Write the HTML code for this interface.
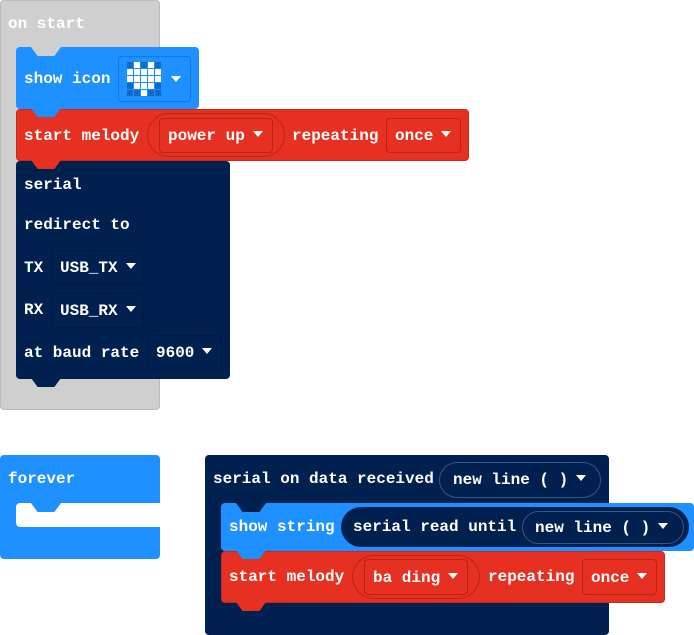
<!DOCTYPE html>
<html><head><meta charset="utf-8"><style>
body{margin:0;width:694px;height:634px;background:#fff;position:relative;overflow:hidden;font-family:"Liberation Mono",monospace;font-size:16px;font-weight:bold;color:#fff}
.a{position:absolute;box-sizing:border-box}
.t{position:absolute;line-height:20px;white-space:pre}
.tab{position:absolute;width:30px;height:9px;clip-path:polygon(0 0,100% 0,78% 100%,22% 100%)}
.dd{position:absolute;box-sizing:border-box;border-radius:4px;line-height:20px;white-space:pre;padding-left:8px}
.arr{display:inline-block;width:0;height:0;border-left:5px solid transparent;border-right:5px solid transparent;border-top:6px solid #fff;vertical-align:middle;margin-left:8px;margin-top:-3px}
.g{width:6px;height:6px;position:absolute}
</style></head><body>
<div class="a" style="left:0;top:0;width:160px;height:410px;background:#cfcfcf;border:1px solid #bcbcbc;border-radius:4px"></div>
<div class="t" style="left:8px;top:14px">on start</div>
<div class="a" style="left:16px;top:47px;width:183px;height:62px;background:#1e90ff;border-radius:4px"></div>
<div class="tab" style="left:31px;top:47px;background:#cfcfcf"></div>
<div class="t" style="left:24px;top:69px">show icon</div>
<div class="a" style="left:118px;top:56px;width:73px;height:46px;border:1px solid #1877d8;border-radius:4px"></div>
<div class="a" style="left:171px;top:76px;width:0;height:0;border-left:5px solid transparent;border-right:5px solid transparent;border-top:6px solid #fff"></div>
<div id="grid"></div>
<div class="a" style="left:16px;top:109px;width:453px;height:52px;background:#e63022;border-radius:4px;border:1px solid #c8281c"></div>
<div class="tab" style="left:31px;top:108px;background:#1e90ff"></div>
<div class="t" style="left:24px;top:126px">start melody</div>
<div class="a" style="left:147px;top:113px;width:138px;height:44px;border:1px solid #b82418;border-radius:22px"></div>
<div class="dd" style="left:159px;top:118px;width:114px;height:35px;border:1px solid #b82418;padding-top:7px">power up<span class="arr"></span></div>
<div class="t" style="left:292px;top:126px">repeating</div>
<div class="dd" style="left:386px;top:118px;width:75px;height:35px;border:1px solid #b82418;padding-top:7px">once<span class="arr"></span></div>
<div class="a" style="left:16px;top:161px;width:214px;height:218px;background:#002050;border-radius:4px"></div>
<div class="tab" style="left:31px;top:160px;background:#e63022"></div>
<div class="tab" style="left:31px;top:378px;background:#002050"></div>
<div class="t" style="left:24px;top:175px">serial</div>
<div class="t" style="left:24px;top:215px">redirect to</div>
<div class="t" style="left:24px;top:258px">TX</div>
<div class="dd" style="left:51px;top:250px;width:93px;height:35px;border:1px solid #001a40;padding-top:7px">USB_TX<span class="arr"></span></div>
<div class="t" style="left:24px;top:300px">RX</div>
<div class="dd" style="left:51px;top:293px;width:93px;height:35px;border:1px solid #001a40;padding-top:7px">USB_RX<span class="arr"></span></div>
<div class="t" style="left:24px;top:343px">at baud rate</div>
<div class="dd" style="left:147px;top:335px;width:75px;height:35px;border:1px solid #001a40;padding-top:7px">9600<span class="arr"></span></div>
<div class="a" style="left:0;top:455px;width:160px;height:104px;background:#1e90ff;border-radius:4px"></div>
<div class="a" style="left:16px;top:503px;width:144px;height:24px;background:#fff;border-radius:4px 0 0 4px"></div>
<div class="tab" style="left:31px;top:503px;background:#1e90ff"></div>
<div class="t" style="left:8px;top:469px">forever</div>
<div class="a" style="left:205px;top:455px;width:404px;height:180px;background:#002050;border-radius:4px"></div>
<div class="t" style="left:213px;top:469px">serial on data received</div>
<div class="dd" style="left:439px;top:462px;width:162px;height:36px;border:1px solid #3a5580;border-radius:18px;padding-left:13px;padding-top:7px">new line ( )<span class="arr"></span></div>
<div class="a" style="left:221px;top:503px;width:473px;height:48px;background:#1e90ff;border-radius:4px"></div>
<div class="tab" style="left:236px;top:503px;background:#002050"></div>
<div class="t" style="left:229px;top:517px">show string</div>
<div class="a" style="left:341px;top:507px;width:348px;height:40px;background:#002050;border-radius:20px"></div>
<div class="t" style="left:353px;top:517px">serial read until</div>
<div class="dd" style="left:522px;top:511px;width:162px;height:33px;border:1px solid #3a5580;border-radius:17px;padding-left:12px;padding-top:6px">new line ( )<span class="arr"></span></div>
<div class="a" style="left:221px;top:551px;width:444px;height:52px;background:#e63022;border-radius:4px;border:1px solid #c8281c"></div>
<div class="tab" style="left:236px;top:550px;background:#1e90ff"></div>
<div class="tab" style="left:236px;top:602px;background:#e63022"></div>
<div class="t" style="left:229px;top:567px">start melody</div>
<div class="a" style="left:352px;top:555px;width:128px;height:44px;border:1px solid #b82418;border-radius:22px"></div>
<div class="dd" style="left:364px;top:559px;width:104px;height:36px;border:1px solid #b82418;padding-top:8px">ba ding<span class="arr"></span></div>
<div class="t" style="left:488px;top:567px">repeating</div>
<div class="dd" style="left:582px;top:559px;width:75px;height:36px;border:1px solid #b82418;padding-top:8px">once<span class="arr"></span></div>
<script>
var p=["01010","11111","11111","01110","00100"],h="";
for(var r=0;r<5;r++)for(var c=0;c<5;c++)h+='<div class="g" style="left:'+(127+c*7)+'px;top:'+(62+r*7)+'px;background:'+(p[r][c]=="1"?"#fff":"#0c6acb")+'"></div>';
document.getElementById("grid").innerHTML=h;
</script>
</body></html>
